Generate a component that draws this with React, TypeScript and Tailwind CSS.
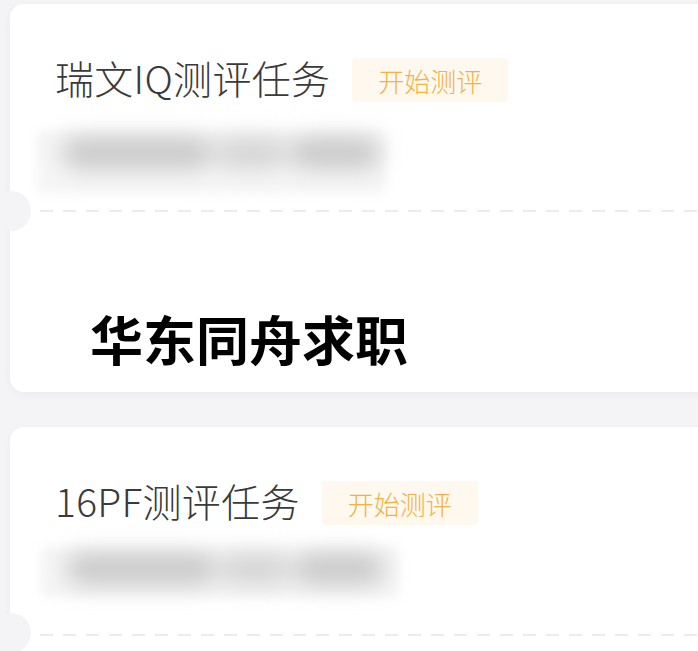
import React from "react";

const font = { fontFamily: '"Noto Sans CJK SC", "Noto Sans", sans-serif' };

function Card({
  title,
  first,
}: {
  title: string;
  first?: boolean;
}) {
  return (
    <div className="relative w-[720px] rounded-[14px] bg-white shadow-[0_2px_10px_rgba(0,0,0,0.04)]">
      <div className="flex items-center pl-[45px] pt-[52px]">
        <span className="relative -top-[3px] text-[39px] font-light leading-[48px] tracking-[0.3px] text-[#3a3a3a]">{title}</span>
        <span className="ml-[22px] flex h-[44px] items-center rounded-[4px] bg-[#fff8ee] px-[26px] text-[26px] font-light text-[#f0b245]">
          开始测评
        </span>
      </div>
      <div
        className={
          first
            ? "ml-[26px] mt-[26px] h-[64px] w-[350px] rounded-[8px] bg-[#f6f6f6] blur-[5px]"
            : "ml-[30px] mt-[19px] h-[52px] w-[360px] rounded-[8px] bg-[#f6f6f6] blur-[5px]"
        }
      >
        <div className="flex gap-[4px] pl-[26px] pt-[8px] blur-[11px]">
          <div className="h-[30px] w-[150px] rounded-full bg-[#c6c6c6]" />
          <div className="h-[30px] w-[70px] rounded-full bg-[#d2d2d2]" />
          <div className="h-[30px] w-[90px] rounded-full bg-[#c6c6c6]" />
        </div>
      </div>
      <div
        className={
          first
            ? "mt-[16px] ml-[30px] h-[2px] bg-[repeating-linear-gradient(to_right,#ececec_0_13px,transparent_13px_23px)]"
            : "mt-[36px] ml-[30px] h-[2px] bg-[repeating-linear-gradient(to_right,#ececec_0_13px,transparent_13px_23px)]"
        }
      />
      <div
        className={
          first
            ? "absolute left-[-19px] top-[187px] h-[40px] w-[40px] rounded-full bg-[#f4f4f6]"
            : "absolute left-[-19px] top-[186px] h-[40px] w-[40px] rounded-full bg-[#f4f4f6]"
        }
      />
      {first ? <div className="h-[180px]" /> : <div className="h-[60px]" />}
    </div>
  );
}

export default function App() {
  return (
    <div className="relative h-[651px] w-[698px] overflow-hidden bg-[#f4f4f6] pl-[10px] pt-[4px]" style={font}>
      <div className="flex flex-col gap-[35px]">
        <Card title="瑞文IQ测评任务" first />
        <Card title="16PF测评任务" />
      </div>
      <div className="absolute left-[90px] top-[307px] text-[53px] font-bold leading-[62px] text-black">华东同舟求职</div>
    </div>
  );
}
